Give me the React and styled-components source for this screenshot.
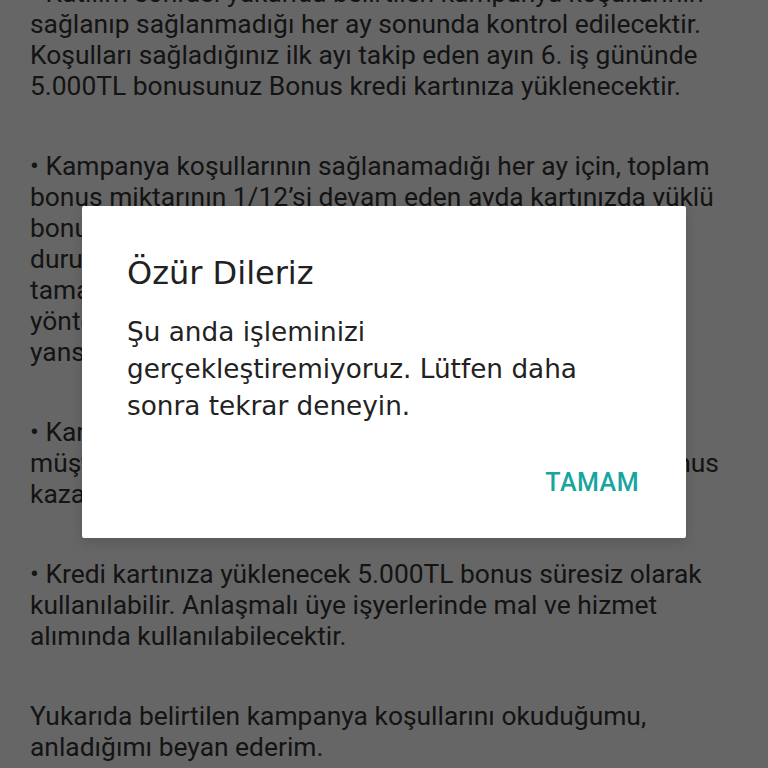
import React from 'react';
import styled, { createGlobalStyle } from 'styled-components';

const GlobalStyle = createGlobalStyle`
    html, body {
        margin: 0;
        padding: 0;
        background: #ffffff;
        overflow: hidden;
    }
    * {
        box-sizing: border-box;
    }
`;

const paragraphs = [
    [
        '• Katılım sonrası yukarıda belirtilen kampanya koşullarının',
        'sağlanıp sağlanmadığı her ay sonunda kontrol edilecektir.',
        'Koşulları sağladığınız ilk ayı takip eden ayın 6. iş gününde',
        '5.000TL bonusunuz Bonus kredi kartınıza yüklenecektir.',
    ],
    [
        '• Kampanya koşullarının sağlanamadığı her ay için, toplam',
        'bonus miktarının 1/12’si devam eden ayda kartınızda yüklü',
        'bonus bulunması durumunda bonusunuzdan düşülecek,',
        'durumunda yeterli bonus bulunmaması durumunda ise',
        'tamamlanmamış tutarı kartınız ödeme yönteminden alın',
        'yöntemine göre hesap ekstrenize borç olarak',
        'yansıtılacaktır.',
    ],
    [
        '• Kampanya süresince koşulları sağlayan',
        'müşterilerimiz her ay için toplam 5.000TL’lik bonusu bonus',
        'kazanacaktır.',
    ],
    [
        '• Kredi kartınıza yüklenecek 5.000TL bonus süresiz olarak',
        'kullanılabilir. Anlaşmalı üye işyerlerinde mal ve hizmet',
        'alımında kullanılabilecektir.',
    ],
    [
        'Yukarıda belirtilen kampanya koşullarını okuduğumu,',
        'anladığımı beyan ederim.',
    ],
];

export default function App() {
    return (
        <>
            <GlobalStyle />
            <Screen>
                <Terms>
                    {paragraphs.map((lines, i) => (
                        <Paragraph key={i}>
                            {lines.map((line, j) => (
                                <Line key={j}>{line}</Line>
                            ))}
                        </Paragraph>
                    ))}
                </Terms>

                <Backdrop>
                    <Dialog role="dialog">
                        <Title>Özür Dileriz</Title>
                        <Message>
                            Şu anda işleminizi
                            <br />
                            gerçekleştiremiyoruz. Lütfen daha
                            <br />
                            sonra tekrar deneyin.
                        </Message>
                        <Actions>
                            <TextButton>TAMAM</TextButton>
                        </Actions>
                    </Dialog>
                </Backdrop>
            </Screen>
        </>
    );
}

const Screen = styled.div`
    position: relative;
    width: 768px;
    height: 768px;
    overflow: hidden;
    background: #ffffff;
`;

const Terms = styled.div`
    display: flex;
    flex-direction: column;
    gap: 49px;
    margin-top: -22px;
    padding-left: 30px;
    font-family: Roboto, "Liberation Sans", sans-serif;
    font-size: 26.4px;
    line-height: 31px;
    color: #333333;
`;

const Paragraph = styled.div`
    display: flex;
    flex-direction: column;
`;

const Line = styled.span`
    white-space: nowrap;
`;

const Backdrop = styled.div`
    position: absolute;
    inset: 0;
    display: flex;
    align-items: center;
    justify-content: center;
    padding-bottom: 24px;
    background: rgba(0, 0, 0, 0.6);
`;

const Dialog = styled.div`
    width: 604px;
    display: flex;
    flex-direction: column;
    padding: 50px 47px 35px 45px;
    background: #ffffff;
    border-radius: 2px;
    box-shadow: 0 4px 12px rgba(0, 0, 0, 0.15);
    font-family: "DejaVu Sans", Roboto, sans-serif;
    color: #212121;
`;

const Title = styled.h2`
    margin: 0;
    font-size: 32px;
    line-height: 35px;
    font-weight: 400;
`;

const Message = styled.p`
    margin: 23px 0 0;
    font-size: 26.3px;
    line-height: 37px;
    font-weight: 400;
    color: #222222;
`;

const Actions = styled.div`
    display: flex;
    justify-content: flex-end;
    margin-top: 38px;
`;

const TextButton = styled.button`
    padding: 0;
    border: none;
    background: transparent;
    font-family: Roboto, "Liberation Sans", sans-serif;
    font-size: 25px;
    line-height: 40px;
    font-weight: 500;
    letter-spacing: 0.5px;
    color: #17a59f;
    cursor: pointer;
`;
